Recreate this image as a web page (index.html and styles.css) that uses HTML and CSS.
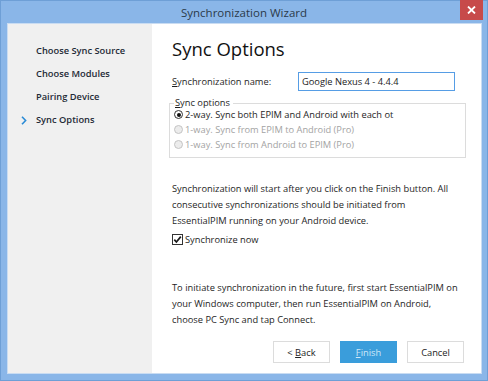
FILE: index.html
```html
<!DOCTYPE html>
<html>
<head>
<meta charset="utf-8">
<link rel="stylesheet" href="styles.css">
</head>
<body>
<div class="window">
  <div class="titlebar">
    <div class="title">Synchronization Wizard</div>
    <div class="close">
      <svg width="9" height="8" viewBox="0 0 9 8"><path d="M1 0.5 L8 7.5 M8 0.5 L1 7.5" stroke="#fff" stroke-width="1.8"/></svg>
    </div>
  </div>
  <div class="client">
    <div class="sidebar">
      <div class="step">Choose Sync Source</div>
      <div class="step">Choose Modules</div>
      <div class="step">Pairing Device</div>
      <div class="step current">
        <svg class="chev" width="6" height="9" viewBox="0 0 6 9"><path d="M1 0.8 L4.6 4.5 L1 8.2" stroke="#2a8bd6" stroke-width="1.6" fill="none"/></svg>
        Sync Options
      </div>
    </div>
    <div class="main">
      <h1 class="heading">Sync Options</h1>
      <div class="name-row">
        <label class="name-label"><u>S</u>ynchronization name:</label>
        <div class="input">Google Nexus 4 - 4.4.4</div>
      </div>
      <div class="group">
        <div class="legend"><u>S</u>ync options</div>
        <div class="radio checked"><span class="dot"></span><span class="rlabel">2-way. Sync both EPIM and Android with each ot</span></div>
        <div class="radio disabled"><span class="dot"></span><span class="rlabel">1-way. Sync from EPIM to Android (Pro)</span></div>
        <div class="radio disabled"><span class="dot"></span><span class="rlabel">1-way. Sync from Android to EPIM (Pro)</span></div>
      </div>
      <p class="para p1">Synchronization will start after you click on the Finish button. All<br>consecutive synchronizations should be initiated from<br>EssentialPIM running on your Android device.</p>
      <div class="check-row">
        <span class="checkbox">
          <svg width="9" height="9" viewBox="0 0 9 9"><path d="M1.3 4.6 L3.4 7 L7.8 1.6" stroke="#1a1a1a" stroke-width="1.7" fill="none"/></svg>
        </span>
        <span>Synchronize now</span>
      </div>
      <p class="para p2">To initiate synchronization in the future, first start EssentialPIM on<br>your Windows computer, then run EssentialPIM on Android,<br>choose PC Sync and tap Connect.</p>
      <div class="buttons">
        <div class="btn"><span>&lt; <u>B</u>ack</span></div>
        <div class="btn primary"><span><u>F</u>inish</span></div>
        <div class="btn"><span>Cancel</span></div>
      </div>
    </div>
  </div>
</div>
</body>
</html>
```

FILE: styles.css
```css
* { box-sizing: border-box; }
html, body { margin: 0; padding: 0; }
body {
  width: 488px;
  height: 381px;
  overflow: hidden;
  font-family: "Segoe UI", "Open Sans", "Noto Sans", sans-serif;
  font-size: 9.3px;
  color: #1e1e1e;
}
.window {
  width: 488px;
  height: 381px;
  background: #8ab6e8;
  border: 1px solid #6e9fd6;
  display: flex;
  flex-direction: column;
}
.titlebar {
  height: 22px;
  display: flex;
  align-items: center;
  justify-content: center;
  position: relative;
}
.title {
  font-size: 11.5px;
  color: #2b3a4a;
  padding-top: 1px;
}
.close {
  position: absolute;
  top: -1px;
  right: 4px;
  width: 23px;
  height: 20px;
  background: #c74a4a;
  display: flex;
  align-items: center;
  justify-content: center;
}
.client {
  flex: 1;
  margin: 0 5px 6px 6px;
  display: flex;
  background: #fff;
  border: 1px solid #c9dcf2;
}
.sidebar {
  width: 144px;
  background: #f0f0f0;
  padding-top: 19px;
  display: flex;
  flex-direction: column;
}
.step {
  height: 23px;
  line-height: 16px;
  padding-left: 28px;
  font-weight: 600;
  color: #1e2a36;
  position: relative;
}
.chev {
  position: absolute;
  left: 13px;
  top: 4px;
}
.main {
  flex: 1;
  padding: 13px 0 0 20px;
  display: flex;
  flex-direction: column;
}
.heading {
  margin: 0;
  font-weight: 400;
  font-size: 18.5px;
  line-height: 24px;
  color: #111;
}
.name-row {
  margin-top: 11px;
  display: flex;
  align-items: center;
}
.name-label { width: 126px; }
.input {
  width: 157px;
  height: 19px;
  border: 1px solid #569de5;
  padding: 0 3px;
  line-height: 17px;
  color: #222;
}
.group {
  margin-top: 12px;
  margin-left: -3px;
  width: 297px;
  height: 55px;
  border: 1px solid #dcdcdc;
  position: relative;
  padding: 3px 0 0 4px;
}
.legend {
  position: absolute;
  top: -7px;
  left: 4px;
  background: #fff;
  padding: 0 3px 0 1px;
  line-height: 12px;
}
.radio {
  height: 15px;
  display: flex;
  align-items: center;
  white-space: nowrap;
}
.dot {
  width: 9px;
  height: 9px;
  border-radius: 50%;
  border: 1px solid #333;
  margin-right: 2px;
  position: relative;
  flex: none;
}
.checked .dot::after {
  content: "";
  position: absolute;
  left: 1.5px;
  top: 1.5px;
  width: 4px;
  height: 4px;
  border-radius: 50%;
  background: #111;
}
.disabled { color: #a3a3a3; }
.disabled .dot { border-color: #c4c4c4; background: #ececec; }
.para {
  margin: 0;
  line-height: 16px;
  width: 300px;
}
.p1 { margin-top: 23px; }
.check-row {
  margin-top: 3px;
  display: flex;
  align-items: center;
  height: 14px;
}
.checkbox {
  width: 11px;
  height: 11px;
  border: 1px solid #333;
  margin-right: 2px;
  display: flex;
  align-items: center;
  justify-content: center;
}
.p2 { margin-top: 34px; }
.buttons {
  margin-top: 13px;
  display: flex;
  justify-content: flex-end;
  gap: 10px;
  padding-right: 17px;
}
.btn {
  width: 57px;
  height: 22px;
  border: 1px solid #dcdcdc;
  background: #fff;
  display: flex;
  align-items: center;
  justify-content: center;
  color: #222;
}
.btn.primary {
  background: #3a9ddb;
  border-color: #3a9ddb;
  color: #cfe8f8;
}
```
